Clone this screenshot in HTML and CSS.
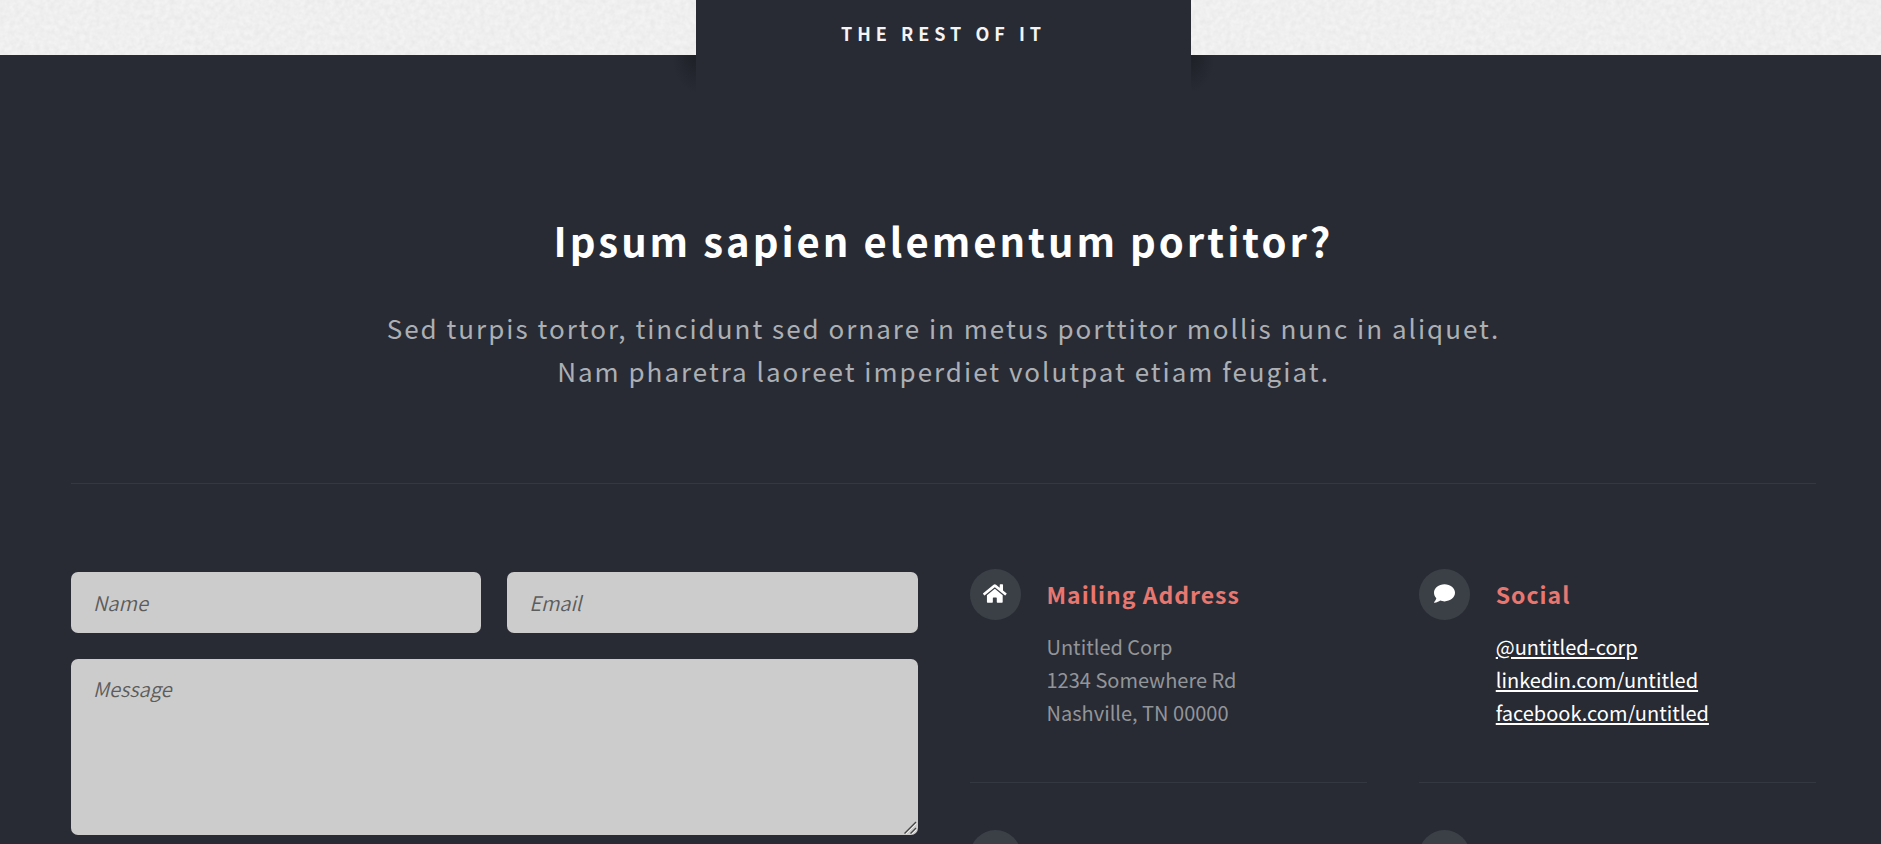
FILE: index.html
```html
<!DOCTYPE html>
<html lang="en">
<head>
<meta charset="utf-8">
<meta name="viewport" content="width=device-width, initial-scale=1">
<title>The Rest of It</title>
<link rel="stylesheet" href="styles.css">
</head>
<body>
<div class="strip">
  <svg class="grain" aria-hidden="true">
    <filter id="grain">
      <feTurbulence type="fractalNoise" baseFrequency="0.2" numOctaves="2" stitchTiles="stitch"/>
      <feColorMatrix values="0 0 0 0 0.6  0 0 0 0 0.6  0 0 0 0 0.6  0.4 0 0 0 -0.1"/>
    </filter>
    <rect width="100%" height="100%" filter="url(#grain)"/>
  </svg>
</div>
<footer class="footer">
  <h2 class="tab">The Rest of It</h2>
  <header class="intro">
    <h3 class="intro-title">Ipsum sapien elementum portitor?</h3>
    <p class="intro-text">Sed turpis tortor, tincidunt sed ornare in metus porttitor mollis nunc in aliquet.<br>Nam pharetra laoreet imperdiet volutpat etiam feugiat.</p>
  </header>
  <div class="columns">
    <form class="form">
      <input class="field" type="text" name="name" placeholder="Name" aria-label="Name">
      <input class="field" type="email" name="email" placeholder="Email" aria-label="Email">
      <textarea class="field message" name="message" placeholder="Message" aria-label="Message"></textarea>
    </form>
    <div class="contacts">
      <section class="contact">
        <span class="badge"><svg class="icon" viewBox="0 0 576 512" aria-hidden="true"><path d="M280.37 148.26L96 300.11V464a16 16 0 0 0 16 16l112.06-.29a16 16 0 0 0 15.92-16V368a16 16 0 0 1 16-16h64a16 16 0 0 1 16 16v95.64a16 16 0 0 0 16 16.05L464 480a16 16 0 0 0 16-16V300L295.67 148.26a12.19 12.19 0 0 0-15.3 0zM571.6 251.47L488 182.56V44.05a12 12 0 0 0-12-12h-56a12 12 0 0 0-12 12v72.61L318.47 43a48 48 0 0 0-61 0L4.34 251.47a12 12 0 0 0-1.6 16.9l25.5 31A12 12 0 0 0 45.15 301l235.22-193.74a12.19 12.19 0 0 1 15.3 0L530.9 301a12 12 0 0 0 16.9-1.6l25.5-31a12 12 0 0 0-1.7-16.93z"/></svg></span>
        <div class="details">
          <h4 class="contact-title">Mailing Address</h4>
          <address class="lines">Untitled Corp<br>1234 Somewhere Rd<br>Nashville, TN 00000</address>
        </div>
      </section>
      <section class="contact">
        <span class="badge"><svg class="icon" viewBox="0 0 512 512" aria-hidden="true"><path d="M256 32C114.6 32 0 125.1 0 240c0 49.6 21.4 95 57 130.7C44.5 421.1 2.7 466 2.2 466.5c-2.2 2.3-2.8 5.7-1.5 8.7S4.8 480 8 480c66.3 0 116-31.8 140.6-51.4 32.7 12.3 69 19.4 107.4 19.4 141.4 0 256-93.1 256-208S397.4 32 256 32z"/></svg></span>
        <div class="details">
          <h4 class="contact-title">Social</h4>
          <p class="lines"><a href="#">@untitled-corp</a><br><a href="#">linkedin.com/untitled</a><br><a href="#">facebook.com/untitled</a></p>
        </div>
      </section>
      <section class="contact"><span class="badge"></span></section>
      <section class="contact"><span class="badge"></span></section>
    </div>
  </div>
</footer>
</body>
</html>
```
FILE: styles.css
```css
* {
  box-sizing: border-box;
}

body {
  margin: 0;
  height: 100vh;
  overflow: hidden;
  background: #282b34;
  color: #939599;
  font-family: "Noto Sans CJK SC", "Noto Sans", sans-serif;
  font-size: 20px;
  line-height: 33px;
}

h2, h3, h4, p {
  margin: 0;
}

.strip {
  height: 55px;
  background: #f3f3f3;
}

.grain {
  display: block;
  width: 100%;
  height: 100%;
}

.footer {
  padding: 0 65px 0 71px;
}

/* The tab rises out of the footer over the light strip. */
.tab {
  position: relative;
  width: 495px;
  height: 90px;
  margin: -55px auto 0;
  padding-top: 17px;
  background: #282b34;
  color: #f4f4f5;
  font-size: 18px;
  letter-spacing: 5px;
  text-align: center;
  text-transform: uppercase;
}

.tab::before,
.tab::after {
  content: "";
  position: absolute;
  top: 55px;
  width: 24px;
  height: 38px;
}

.tab::before {
  right: 100%;
  background: radial-gradient(ellipse at top right, #1e2027, transparent 70%);
}

.tab::after {
  left: 100%;
  background: radial-gradient(ellipse at top left, #1e2027, transparent 70%);
}

.intro {
  padding: 120px 0 91px;
  border-bottom: 1px solid #343840;
  text-align: center;
}

.intro-title {
  color: #fff;
  font-size: 40px;
  line-height: 60px;
  letter-spacing: 3px;
}

.intro-text {
  margin-top: 36px;
  color: #acafb3;
  font-size: 26px;
  line-height: 43px;
  letter-spacing: 2px;
}

.columns {
  display: grid;
  grid-template-columns: 1fr 1fr;
  gap: 52px;
  padding-top: 85px;
}

.form {
  display: grid;
  grid-template-columns: 1fr 1fr;
  gap: 26px;
  align-content: start;
  padding-top: 3px;
}

.field {
  width: 100%;
  height: 61px;
  padding: 13px 22px;
  border: 0;
  border-radius: 7px;
  background: #ccc;
  color: #444;
  font: inherit;
}

.field::placeholder {
  color: #5c5c5c;
  font-style: italic;
  font-weight: 350;
}

.message {
  display: block;
  grid-column: 1 / -1;
  height: 176px;
  resize: both;
}

.message::-webkit-resizer {
  background: url("data:image/svg+xml,%3Csvg xmlns='http://www.w3.org/2000/svg' viewBox='0 0 15 15'%3E%3Cpath d='M1.500 13.500L13 2M7.500 13.500L13 8' stroke='%23444' stroke-width='1.300' fill='none'/%3E%3Cpath d='M3 14L13.500 3.500M9 14L13.500 9.500' stroke='%23eee' fill='none'/%3E%3C/svg%3E") center / 100% no-repeat;
}

.contacts {
  display: grid;
  grid-template-columns: 1fr 1fr;
  gap: 47px 52px;
}

.contact {
  display: flex;
  gap: 26px;
  padding-bottom: 53px;
  border-bottom: 1px solid #343840;
}

.badge {
  display: flex;
  flex: none;
  align-items: center;
  justify-content: center;
  width: 51px;
  height: 51px;
  padding-bottom: 2px;
  border-radius: 50%;
  background: #3b4047;
}

.icon {
  height: 21px;
  fill: #fff;
}

.details {
  padding-top: 9px;
}

.contact-title {
  margin-bottom: 19px;
  color: #e97770;
  font-size: 23px;
  letter-spacing: 1px;
}

.lines {
  font-style: normal;
}

.lines a {
  color: #fff;
  text-decoration-thickness: 2px;
  text-underline-offset: 2px;
}
```
